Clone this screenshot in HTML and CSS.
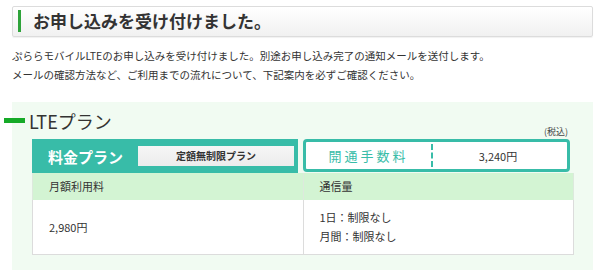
FILE: index.html
```html
<!DOCTYPE html>
<html lang="ja">
<head>
<meta charset="utf-8">
<link rel="stylesheet" href="styles.css">
</head>
<body>
<div class="page">
  <div class="head">
    <h1 class="title">お申し込みを受け付けました。</h1>
  </div>
  <p class="lead">ぷららモバイルLTEのお申し込みを受け付けました。別途お申し込み完了の通知メールを送付します。<br>メールの確認方法など、ご利用までの流れについて、下記案内を必ずご確認ください。</p>
  <section class="panel">
    <div class="panel-head">
      <h2 class="plan-title">LTEプラン</h2>
      <span class="tax">(税込)</span>
    </div>
    <div class="plan-row">
      <div class="plan">
        <span class="plan-label">料金プラン</span>
        <span class="plan-name">定額無制限プラン</span>
      </div>
      <div class="fee">
        <span class="fee-label">開通手数料</span>
        <span class="fee-value">3,240円</span>
      </div>
    </div>
    <table class="detail">
      <tr class="detail-head">
        <th>月額利用料</th>
        <th>通信量</th>
      </tr>
      <tr class="detail-body">
        <td>2,980円</td>
        <td>1日：制限なし<br>月間：制限なし</td>
      </tr>
    </table>
  </section>
</div>
</body>
</html>
```
FILE: styles.css
```css
html, body {
  margin: 0;
  padding: 0;
  background: #fff;
}
body {
  font-family: "Noto Sans CJK JP", "Noto Sans", sans-serif;
  color: #333;
}
.page {
  padding: 6px 7px 0 12px;
}
.head {
  border: 1px solid #dcdcdc;
  border-radius: 2px;
  background: linear-gradient(#ffffff, #f1f1f1);
  box-shadow: 0 1px 1px rgba(0,0,0,0.06);
  padding: 3px 0 4px 5px;
}
.title {
  margin: 0;
  border-left: 3px solid #2ea33a;
  padding-left: 12px;
  font-size: 17px;
  line-height: 22px;
  font-weight: bold;
  color: #333;
}
.lead {
  margin: 9px 0 0 0;
  font-size: 10.5px;
  line-height: 19px;
  color: #333;
}
.panel {
  margin-top: 18px;
  background: #f1fbf2;
  padding: 7px 19px 15px 20px;
}
.panel-head {
  display: flex;
  justify-content: space-between;
  align-items: flex-end;
  margin-right: 6px;
}
.plan-title {
  margin: 0 0 0 -28px;
  display: flex;
  align-items: center;
  gap: 4px;
  font-size: 18px;
  line-height: 24px;
  font-weight: normal;
  color: #333;
}
.plan-title::before {
  content: "";
  width: 21px;
  height: 5px;
  margin-top: -2px;
  background: #16aa28;
}
.tax {
  font-size: 9px;
  line-height: 12px;
  margin-bottom: -5px;
  color: #444;
}
.plan-row {
  margin-top: 6px;
  margin-right: 4px;
  display: grid;
  grid-template-columns: 266px 1fr;
  gap: 5px;
  align-items: start;
}
.plan {
  background: #38bca8;
  height: 34px;
  display: flex;
  align-items: center;
  padding: 0 4px 0 16px;
  box-sizing: border-box;
}
.plan-label {
  color: #fff;
  font-weight: bold;
  font-size: 15px;
  width: 90px;
}
.plan-name {
  flex: 1;
  height: 20px;
  line-height: 20px;
  background: linear-gradient(#f6f6f6, #ececec);
  text-align: center;
  font-size: 10px;
  font-weight: bold;
  color: #333;
}
.fee {
  height: 33px;
  box-sizing: border-box;
  border: 3px solid #38bca8;
  border-radius: 4px;
  background: #fff;
  display: grid;
  grid-template-columns: 127px 1fr;
  align-items: stretch;
}
.fee-label {
  display: flex;
  align-items: center;
  justify-content: center;
  color: #38bca8;
  font-size: 13px;
  letter-spacing: 3px;
  border-right: 2px dashed #38bca8;
  margin: 2px 0;
}
.fee-value {
  display: flex;
  align-items: center;
  justify-content: center;
  font-size: 11px;
  color: #333;
  padding-right: 4px;
}
.detail {
  width: 100%;
  margin-top: 0;
  border-collapse: collapse;
  font-size: 11px;
  color: #333;
}
.detail th, .detail td {
  text-align: left;
  font-weight: normal;
  padding: 0 0 0 16px;
  width: 50%;
}
.detail-head th {
  background: #d3f4d3;
  height: 27px;
  line-height: 19px;
  border-left: 1px solid #dde9dd;
  border-right: 1px solid #dde9dd;
}
.detail-body td {
  background: #fff;
  height: 54px;
  line-height: 19px;
  border: 1px solid #dcdcdc;
  border-top: none;
}
```
